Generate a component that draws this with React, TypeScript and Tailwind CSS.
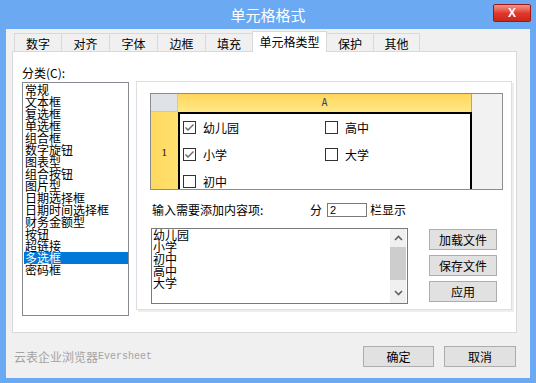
import React from "react";

const cats = ["常规","文本框","复选框","单选框","组合框","数字旋钮","图表型","组合按钮","图片型","日期选择框","日期时间选择框","财务金额型","按钮","超链接","多选框","密码框"];

const tabs = [
  { t: "数字", w: 47 },
  { t: "对齐", w: 48 },
  { t: "字体", w: 48 },
  { t: "边框", w: 48 },
  { t: "填充", w: 47 },
  { t: "单元格类型", w: 75, sel: true },
  { t: "保护", w: 46 },
  { t: "其他", w: 47 },
];

function Check({ checked, label }: { checked?: boolean; label: string }) {
  return (
    <div className="flex items-center h-[13px]">
      <div className="w-[13px] h-[13px] border border-[#333333] bg-white flex items-center justify-center">
        {checked && (
          <svg width="11" height="11" viewBox="0 0 11 11">
            <path d="M1.5 5.5 L4 8 L9.5 2.5" stroke="#666666" strokeWidth="1.4" fill="none" />
          </svg>
        )}
      </div>
      <span className="ml-[7px] text-[12px] leading-[13px] text-black">{label}</span>
    </div>
  );
}

function Btn({ children, w }: { children: React.ReactNode; w: string }) {
  return (
    <div className={`${w} h-[21px] bg-[#e1e1e1] border border-[#adadad] flex items-center justify-center text-[12px] leading-[12px] text-black`}>
      {children}
    </div>
  );
}

export default function App() {
  return (
    <div className="w-[536px] h-[383px] bg-[#6ca9f3] flex flex-col overflow-hidden font-['Noto_Sans_CJK_SC',sans-serif]">
      {/* title bar */}
      <div className="h-[29px] relative flex items-center justify-center text-white text-[15px] leading-[15px] pb-[1px]">
        单元格格式
        <div className="absolute right-[5px] top-[4px] w-[38px] h-[18px] rounded-[2px] border border-[#9b1b12] bg-gradient-to-b from-[#f2928a] via-[#e2382c] to-[#c9261a] flex items-center justify-center">
          <span className="text-white font-bold text-[12px] leading-[12px] font-['Liberation_Sans',sans-serif]">X</span>
        </div>
      </div>

      {/* client */}
      <div className="mx-[6px] h-[349px] bg-[#f0f0f0] flex flex-col">
        {/* tabs */}
        <div className="h-[22px] pl-[8px] flex items-end relative z-10">
          {tabs.map((tb, i) => {
            const prevSel = i > 0 && tabs[i - 1].sel;
            const last = i === tabs.length - 1;
            if (tb.sel) {
              return (
                <div
                  key={tb.t}
                  style={{ width: tb.w }}
                  className="h-[21px] -mb-px bg-white border-l border-t border-r border-[#d9d9d9] flex items-center justify-center text-[12px] leading-[12px] text-black pb-[1px]"
                >
                  {tb.t}
                </div>
              );
            }
            return (
              <div
                key={tb.t}
                style={{ width: tb.w }}
                className={`h-[18px] bg-[#f0f0f0] border-t border-[#d9d9d9] flex items-center justify-center text-[12px] leading-[12px] text-black pt-[2px] ${prevSel ? "" : "border-l"} ${last ? "border-r" : ""}`}
              >
                {tb.t}
              </div>
            );
          })}
        </div>

        {/* panel */}
        <div className="ml-[6px] w-[505px] h-[282px] bg-white border border-[#d9d9d9] flex items-start">
          {/* left column */}
          <div className="ml-[9px] pt-[13px] flex flex-col">
            <div className="h-[17px] text-[12px] leading-[16px] text-black">分类(C):</div>
            <div className="w-[107px] h-[234px] border border-[#868a91] bg-white pt-[1px] pl-px flex flex-col">
              {cats.map((c) => (
                <div
                  key={c}
                  className={`h-[12px] w-[104px] pl-px text-[12px] leading-[12px] whitespace-nowrap ${c === "多选框" ? "bg-[#0078d7] text-white" : "text-black"}`}
                >
                  {c}
                </div>
              ))}
            </div>
          </div>

          {/* right inner panel */}
          <div className="ml-[7px] mt-[29px] w-[376px] h-[229px] border border-[#dedede] shadow-[2px_2px_0_#eeeeee] bg-white flex flex-col">
            {/* grid preview */}
            <div className="ml-[13px] mt-[11px] w-[353px] h-[97px] border border-[#8c8c8c] grid grid-cols-[27px_294px_30px] grid-rows-[18px_77px] overflow-hidden">
              <div className="bg-[#dfe3e8] border-r border-b border-[#c4c8ce]" />
              <div className="bg-gradient-to-b from-[#ffd65c] to-[#ffe985] border-r border-[#d9a040] flex items-center justify-center">
                <span className="text-[10px] leading-[10px] text-[#2c4a66] font-['DejaVu_Sans_Mono',monospace]">A</span>
              </div>
              <div className="bg-[#f2f2f2] row-span-2" />
              <div className="bg-gradient-to-r from-[#ffd95f] to-[#ffe070] flex justify-center pt-[36px]">
                <span className="text-[10px] leading-[10px] text-[#222222] font-['DejaVu_Serif',serif]">1</span>
              </div>
              <div className="bg-white border-l-2 border-t-2 border-r-2 border-black overflow-hidden pl-[3px] pt-[7px] grid grid-cols-[142px_142px] auto-rows-[27px]">
                <Check checked label="幼儿园" />
                <Check label="高中" />
                <Check checked label="小学" />
                <Check label="大学" />
                <Check label="初中" />
              </div>
            </div>

            {/* input row */}
            <div className="ml-[15px] mt-[13px] h-[14px] flex items-center text-[12px] leading-[12px] text-black">
              <div className="w-[158px]">输入需要添加内容项:</div>
              <span>分</span>
              <div className="ml-[5px] w-[40px] h-[14px] border border-[#7a7a7a] bg-white pl-[2px] text-[11px] leading-[12px] font-['Liberation_Sans',sans-serif]">2</div>
              <span className="ml-[3px]">栏显示</span>
            </div>

            {/* textarea + buttons */}
            <div className="mt-[11px] ml-[14px] flex items-start">
              <div className="w-[257px] h-[76px] border border-[#7a7a7a] bg-white flex">
                <div className="flex-1 pl-px flex flex-col text-[12px] leading-[12px] text-black">
                  <div>幼儿园</div>
                  <div>小学</div>
                  <div>初中</div>
                  <div>高中</div>
                  <div>大学</div>
                </div>
                <div className="w-[16px] mr-px bg-[#f0f0f0] flex flex-col items-center">
                  <div className="h-[18px] flex items-center justify-center">
                    <svg width="9" height="6" viewBox="0 0 9 6">
                      <path d="M1 5 L4.5 1.5 L8 5" stroke="#606060" strokeWidth="1.6" fill="none" />
                    </svg>
                  </div>
                  <div className="w-[16px] h-[33px] bg-[#cdcdcd]" />
                  <div className="flex-1 flex items-center justify-center pt-[2px]">
                    <svg width="9" height="6" viewBox="0 0 9 6">
                      <path d="M1 1 L4.5 4.5 L8 1" stroke="#606060" strokeWidth="1.6" fill="none" />
                    </svg>
                  </div>
                </div>
              </div>
              <div className="ml-[21px] mt-px flex flex-col gap-[5px]">
                <Btn w="w-[68px]">加载文件</Btn>
                <Btn w="w-[68px]">保存文件</Btn>
                <Btn w="w-[68px]">应用</Btn>
              </div>
            </div>
          </div>
        </div>

        {/* footer */}
        <div className="flex-1 flex items-start pt-[13px] pl-[8px] pr-[14px]">
          <div className="h-[21px] flex items-center text-[12px] leading-[12px] text-[#a3a3a3]">
            <span>云表企业浏览器</span>
            <span className="text-[10px] font-['Liberation_Mono',monospace]">Eversheet</span>
          </div>
          <div className="ml-auto flex gap-[10px]">
            <Btn w="w-[71px]">确定</Btn>
            <Btn w="w-[72px]">取消</Btn>
          </div>
        </div>
      </div>
    </div>
  );
}
